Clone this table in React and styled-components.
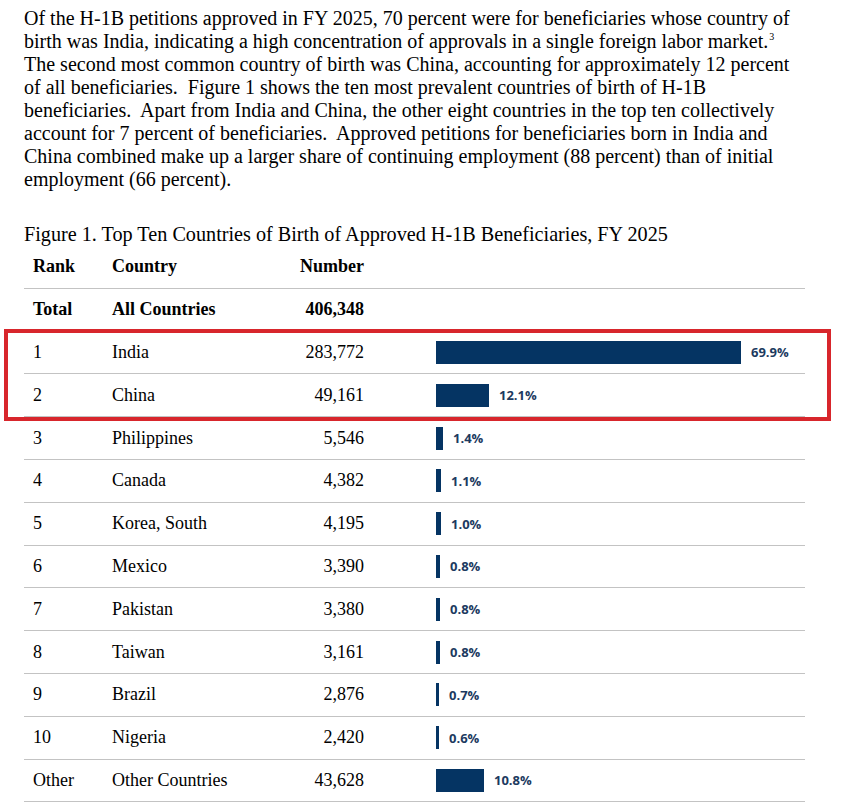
import React from "react";
import styled, { createGlobalStyle } from "styled-components";

const GlobalStyle = createGlobalStyle`
  html, body {
    margin: 0;
    padding: 0;
    background: #ffffff;
  }
  body {
    font-family: "Liberation Serif", "Times New Roman", serif;
    color: #000000;
  }
`;

const rows = [
  { rank: "1", country: "India", number: "283,772", pct: "69.9%", bar: 305 },
  { rank: "2", country: "China", number: "49,161", pct: "12.1%", bar: 53 },
  { rank: "3", country: "Philippines", number: "5,546", pct: "1.4%", bar: 7 },
  { rank: "4", country: "Canada", number: "4,382", pct: "1.1%", bar: 5 },
  { rank: "5", country: "Korea, South", number: "4,195", pct: "1.0%", bar: 5 },
  { rank: "6", country: "Mexico", number: "3,390", pct: "0.8%", bar: 4 },
  { rank: "7", country: "Pakistan", number: "3,380", pct: "0.8%", bar: 4 },
  { rank: "8", country: "Taiwan", number: "3,161", pct: "0.8%", bar: 4 },
  { rank: "9", country: "Brazil", number: "2,876", pct: "0.7%", bar: 3 },
  { rank: "10", country: "Nigeria", number: "2,420", pct: "0.6%", bar: 3 },
  { rank: "Other", country: "Other Countries", number: "43,628", pct: "10.8%", bar: 48 },
];

function DataRow({ r }) {
  return (
    <Row>
      <Rank>{r.rank}</Rank>
      <Country>{r.country}</Country>
      <Num>{r.number}</Num>
      <BarCell>
        <Bar style={{ width: r.bar }} />
        <Pct>{r.pct}</Pct>
      </BarCell>
    </Row>
  );
}

export default function App() {
  return (
    <Page>
      <GlobalStyle />
      <Para>
        Of the H-1B petitions approved in FY 2025, 70 percent were for beneficiaries whose country of
        <br />
        birth was India, indicating a high concentration of approvals in a single foreign labor market.
        <Sup>3</Sup>
        <br />
        The second most common country of birth was China, accounting for approximately 12 percent
        <br />
        of all beneficiaries.&nbsp; Figure 1 shows the ten most prevalent countries of birth of H-1B
        <br />
        beneficiaries.&nbsp; Apart from India and China, the other eight countries in the top ten collectively
        <br />
        account for 7 percent of beneficiaries.&nbsp; Approved petitions for beneficiaries born in India and
        <br />
        China combined make up a larger share of continuing employment (88 percent) than of initial
        <br />
        employment (66 percent).
      </Para>

      <Caption>Figure 1. Top Ten Countries of Birth of Approved H-1B Beneficiaries, FY 2025</Caption>

      <Table>
        <Row $bold>
          <Rank>Rank</Rank>
          <Country>Country</Country>
          <Num>Number</Num>
          <BarCell />
        </Row>
        <Row $bold>
          <Rank>Total</Rank>
          <Country>All Countries</Country>
          <Num>406,348</Num>
          <BarCell />
        </Row>
        <Highlight>
          {rows.slice(0, 2).map((r) => (
            <DataRow key={r.rank} r={r} />
          ))}
        </Highlight>
        {rows.slice(2).map((r) => (
          <DataRow key={r.rank} r={r} />
        ))}
      </Table>
    </Page>
  );
}

const Page = styled.div`
  padding: 7px 0 0 24px;
  width: 833px;
`;

const Para = styled.p`
  margin: 0;
  font-size: 20px;
  line-height: 23px;
  white-space: nowrap;
`;

const Sup = styled.sup`
  font-size: 10px;
  vertical-align: 8px;
  line-height: 0;
  margin-left: 1px;
`;

const Caption = styled.div`
  margin-top: 32px;
  font-size: 20.2px;
  line-height: 23px;
  white-space: nowrap;
`;

const Table = styled.div`
  width: 781px;
  display: flex;
  flex-direction: column;
`;

const Row = styled.div`
  display: grid;
  grid-template-columns: 79px 180px 72px 1fr;
  align-items: center;
  height: 41.8px;
  padding-left: 9px;
  border-bottom: 1px solid #c3c3c3;
  font-size: 18px;
  font-weight: ${(p) => (p.$bold ? 700 : 400)};
  white-space: nowrap;
`;

const Rank = styled.div``;

const Country = styled.div``;

const Num = styled.div`
  text-align: right;
`;

const BarCell = styled.div`
  display: flex;
  align-items: center;
  gap: 10px;
  margin-left: 72px;
  height: 23px;
`;

const Bar = styled.div`
  height: 23px;
  background: #053463;
  flex: none;
`;

const Pct = styled.span`
  font-family: "Open Sans", "Liberation Sans", sans-serif;
  font-weight: 700;
  font-size: 13px;
  color: #1c3a60;
`;

const Highlight = styled.div`
  position: relative;
  &::after {
    content: "";
    position: absolute;
    top: -3px;
    bottom: -4px;
    left: -20px;
    right: -26px;
    border: 4.5px solid #d8262c;
    pointer-events: none;
  }
`;
